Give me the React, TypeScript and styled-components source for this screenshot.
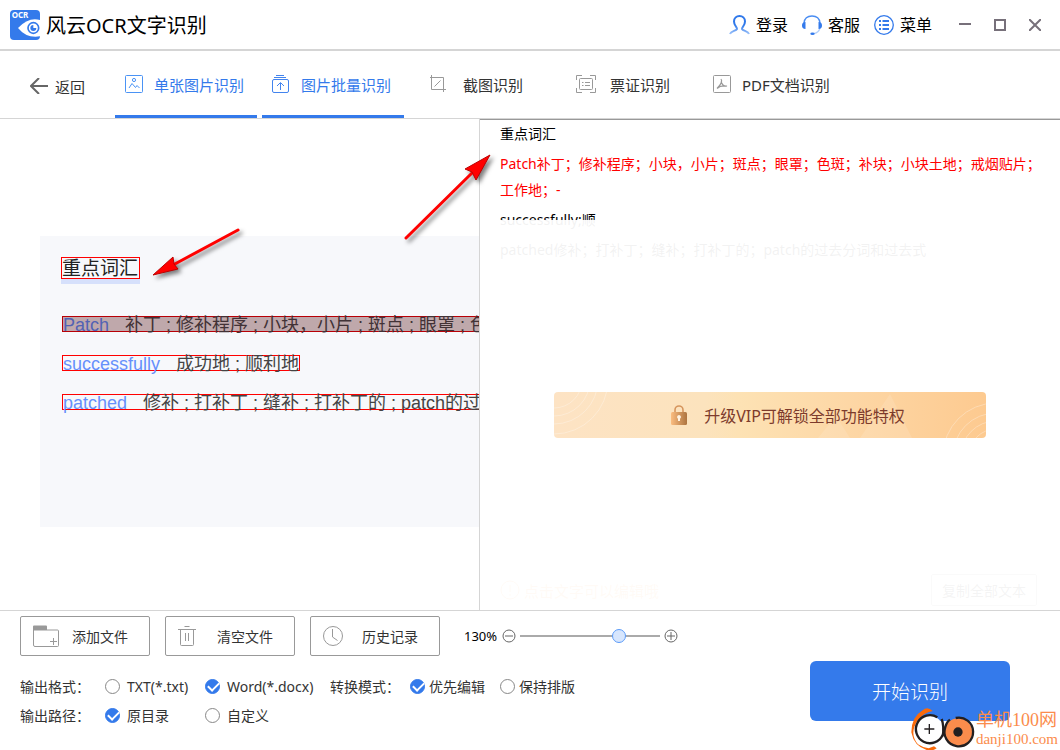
import React, { useState } from "react";
import styled, { createGlobalStyle, css } from "styled-components";

const BLUE = "#347aeb";
const INK = "#333";
const LINE = "#d5d5d5";
const GREY = "#999";

const GlobalStyle = createGlobalStyle`
  * { box-sizing: border-box; }
  body {
    margin: 0;
    background: #fff;
    color: ${INK};
    font-family: "Noto Sans", "Noto Sans CJK SC", sans-serif;
    font-size: 14px;
  }
  button, input { font: inherit; color: inherit; margin: 0; }
  button { background: none; border: 0; padding: 0; cursor: pointer; white-space: nowrap; }
  svg { display: block; flex: none; }
`;

const Page = styled.div`
  min-height: 100vh;
  display: flex;
  flex-direction: column;
`;

/* Title bar */
const TitleBar = styled.header`
  display: flex;
  align-items: center;
  height: 51px;
  padding: 0 8px 0 10px;
  border-bottom: 2px solid ${LINE};
`;
const AppTitle = styled.h1`
  flex: 1;
  margin: 0;
  padding: 2px 0 0 6px;
  font-size: 20px;
  font-weight: 400;
  line-height: 30px;
  color: #000;
  white-space: nowrap;
`;
const HeaderActions = styled.div`
  display: flex;
  gap: 14px;
  margin-right: 15px;
`;
const HeaderButton = styled.button`
  display: flex;
  align-items: center;
  gap: 6px;
  font-size: 16px;
  line-height: 24px;
  color: #000;
`;
const WindowButton = styled.button`
  width: 35px;
  height: 30px;
  display: flex;
  align-items: center;
  justify-content: center;
`;

/* Navigation */
const Nav = styled.nav`
  display: flex;
  height: 68px;
  padding-left: 30px;
  border-bottom: 1px solid ${LINE};
`;
const BackButton = styled.button`
  display: flex;
  align-items: center;
  gap: 7px;
  width: 85px;
  padding-top: 3px;
  font-size: 15px;
`;
const Tabs = styled.div`
  display: flex;
  gap: 5px;
`;
const Tab = styled.button<{ $active?: boolean; $short?: boolean }>`
  display: flex;
  align-items: center;
  gap: ${(p) => (p.$short ? 14 : 10)}px;
  width: 142px;
  padding-left: ${(p) => (p.$short ? 20 : 9)}px;
  padding-top: 2px;
  font-size: 15px;
  color: ${(p) => (p.$active ? BLUE : INK)};
  border-bottom: 3px solid ${(p) => (p.$active ? BLUE : "transparent")};
`;

/* Work area */
const Work = styled.main`
  flex: 1;
  display: grid;
  grid-template-columns: minmax(0, 24fr) minmax(0, 29fr);
`;
const PreviewPane = styled.section`
  position: relative;
  padding: 117px 0 0 40px;
  border-right: 1px solid ${LINE};
`;
const Scan = styled.div`
  min-height: 291px;
  padding: 21px 0 0 21px;
  overflow: hidden;
  background: #f7f8fb;
  display: flex;
  flex-direction: column;
  align-items: flex-start;
  font-family: "Liberation Sans", "Noto Sans CJK SC", sans-serif;
`;
const ScanTitle = styled.div`
  height: 27px;
  margin-bottom: 32px;
  border-bottom: 5px solid #d6e0fb;
`;
const ScanTitleBox = styled.div`
  width: 79px;
  height: 22px;
  border: 1px solid #f00;
  font-size: 19px;
  line-height: 22px;
  white-space: nowrap;
  color: #222;
`;
const ScanLine = styled.div<{ $selected?: boolean }>`
  height: 16px;
  margin: 0 0 23px 1px;
  border: 1px solid #f00;
  font-size: 18px;
  line-height: 16px;
  white-space: pre;
  color: #444;
  ${(p) =>
    p.$selected &&
    css`
      background: #bfa8ab;
      border-color: #b80006;
      color: #423236;
    `}
`;
const Word = styled.span<{ $selected?: boolean }>`
  margin-right: 16px;
  color: ${(p) => (p.$selected ? "#5262b4" : "#6690fb")};
`;
const Arrow = styled.svg`
  position: absolute;
  z-index: 2;
  overflow: visible;
  filter: drop-shadow(3px 3px 2px rgba(0, 0, 0, 0.5));
`;
const ScanArrow = styled(Arrow)`
  left: 145px;
  top: 103px;
`;
const ResultArrow = styled(Arrow)`
  right: -20px;
  top: 25px;
`;

const ResultPane = styled.section`
  position: relative;
  display: flex;
  flex-direction: column;
  padding: 1px 12px 4px 20px;
  border-top: 1px solid #999;
`;
const ResultText = styled.div`
  flex: 1;
  display: flex;
  flex-direction: column;
  gap: 4px;
  line-height: 26px;
  color: #000;
`;
const ResultLine = styled.p<{ $hot?: boolean }>`
  margin: 0;
  color: ${(p) => (p.$hot ? "#f00" : "inherit")};
`;
const ResultFoot = styled.div`
  display: flex;
  align-items: center;
  justify-content: space-between;
  padding-right: 11px;
`;
const Hint = styled.span`
  display: flex;
  align-items: center;
  gap: 4px;
  font-size: 15px;
  color: #f5a04a;
`;
const CopyButton = styled.button`
  width: 106px;
  height: 32px;
  border: 1px solid #999;
  border-radius: 2px;
`;
const Veil = styled.div`
  position: absolute;
  inset: 100px 0 0 0;
  display: flex;
  align-items: center;
  justify-content: center;
  background: rgba(255, 255, 255, 0.95);
`;
const VipButton = styled.button`
  position: relative;
  display: flex;
  align-items: center;
  justify-content: center;
  gap: 17px;
  width: 432px;
  height: 46px;
  padding-left: 36px;
  overflow: hidden;
  border-radius: 4px;
  font-size: 16px;
  color: #7d3b2c;
  background: linear-gradient(90deg, #fde3c4 0%, #fce3bd 35%, #fde2b4 43%, #fdd6a4 70%, #fdca90 100%);
`;
const VipPattern = styled.svg`
  position: absolute;
  inset: 0;
`;
const VipLabel = styled.span`
  position: relative;
`;

/* Footer */
const Footer = styled.footer`
  display: flex;
  justify-content: space-between;
  padding: 5px 50px 18px 20px;
  border-top: 1px solid ${LINE};
`;
const Controls = styled.div`
  display: flex;
  flex-direction: column;
`;
const Toolbar = styled.div`
  display: flex;
  align-items: center;
  gap: 15px;
  margin-bottom: 18px;
`;
const ToolButton = styled.button`
  display: flex;
  align-items: center;
  gap: 12px;
  width: 130px;
  height: 40px;
  padding-left: 11px;
  border: 1px solid ${GREY};
  border-radius: 2px;
`;
const Zoom = styled.div`
  display: flex;
  align-items: center;
  margin-left: 9px;
  gap: 4px;
`;
const ZoomValue = styled.output`
  width: 34px;
  font-size: 13px;
  color: #000;
  white-space: nowrap;
`;
const ZoomSlider = styled.input`
  appearance: none;
  width: 140px;
  height: 16px;
  background: linear-gradient(#aaa, #aaa) center / 100% 2px no-repeat;
  &::-webkit-slider-thumb {
    appearance: none;
    width: 14px;
    height: 14px;
    border: 1px solid #5b9bf8;
    border-radius: 50%;
    background: #d7e6fd;
  }
`;
const Row = styled.div`
  display: flex;
  align-items: center;
  height: 24px;
  margin-bottom: 5px;
`;
const RowLabel = styled.span<{ $width: number }>`
  width: ${(p) => p.$width}px;
  white-space: nowrap;
`;
const OptionLabel = styled.label<{ $width: number; $tight?: boolean }>`
  display: flex;
  align-items: center;
  gap: ${(p) => (p.$tight ? 4 : 7)}px;
  width: ${(p) => p.$width}px;
  white-space: nowrap;
`;
const Radio = styled.input`
  appearance: none;
  flex: none;
  position: relative;
  width: 15px;
  height: 15px;
  border: 1px solid #888;
  border-radius: 50%;
  background: #fff;
  &:checked {
    border-color: ${BLUE};
    background: ${BLUE};
  }
  &:checked::after {
    content: "";
    position: absolute;
    left: 2px;
    top: 2px;
    width: 9px;
    height: 5px;
    border: solid #fff;
    border-width: 0 0 2px 2px;
    transform: rotate(-45deg);
  }
`;
const StartButton = styled.button`
  width: 200px;
  height: 60px;
  margin-top: 45px;
  border-radius: 6px;
  background: ${BLUE};
  color: #fff;
  font-size: 19px;
  font-weight: 300;
`;
const Watermark = styled.div`
  position: absolute;
  right: 2px;
  bottom: 0;
  display: flex;
  align-items: flex-end;
  pointer-events: none;
`;
const WatermarkText = styled.div`
  padding-bottom: 2px;
  font-family: "Liberation Serif", "Noto Sans CJK SC", serif;
  font-size: 18px;
  line-height: 19px;
  color: #fb8c4c;
  white-space: nowrap;
`;
const WatermarkUrl = styled.div`
  font-size: 15px;
  line-height: 18px;
`;
const Frame = styled.div`
  position: relative;
`;

const Logo = () => (
  <svg width="30" height="30" viewBox="0 0 90 90">
    <rect width="90" height="90" rx="12" fill={BLUE} />
    <path d="M90 30Q56 20 24 54Q50 86 90 79z" fill="#fff" />
    <circle cx="70" cy="54" r="16" fill="#fff" stroke={BLUE} strokeWidth="5" />
    <path d="M70 45A9 9 0 1 0 79 54H70z" fill={BLUE} />
    <text x="5" y="24" fontFamily="Noto Sans, sans-serif" fontWeight="700" fontSize="24" fill="#fff">OCR</text>
  </svg>
);

const UserIcon = () => (
  <svg width="21" height="20" viewBox="0 0 21 20" fill="none" stroke="url(#userFade)" strokeWidth="2">
    <defs>
      <linearGradient id="userFade" x1="0" y1="0" x2="0" y2="1">
        <stop offset="0.5" stopColor="#2f78ea" />
        <stop offset="1" stopColor="#9cc2fa" />
      </linearGradient>
    </defs>
    <path d="M1 19c1-3 6-3 7-5 .5-1.600-3-3-3-7.500C5 3 7.500 1 10.500 1S16 3 16 6.500c0 4.500-3.500 5.900-3 7.500 1 2 6 2 7 5" />
  </svg>
);
const HeadsetIcon = () => (
  <svg width="20" height="20" viewBox="0 0 20 20" fill="none">
    <path d="M2 8C2.500 3 6 1 10 1s7.500 2 8 7" stroke="#4a8df2" strokeWidth="1.300" />
    <path d="M18 13c-1 3.500-3 5-6 5.600" stroke="#b4d0fa" strokeWidth="1.300" />
    <path d="M3.500 7C1 7 0 8.500 0 10.500S1 14 3.500 14zM16.500 7C19 7 20 8.500 20 10.500S19 14 16.500 14z" fill={BLUE} />
    <ellipse cx="10.500" cy="18.700" rx="2.200" ry="1.300" fill={BLUE} />
  </svg>
);
const MenuIcon = () => (
  <svg width="20" height="20" viewBox="0 0 20 20" fill="none" stroke={BLUE}>
    <circle cx="10" cy="10" r="9.300" strokeWidth="1.300" />
    <path d="M5 6h2M8.500 6H15M5 10h2M8.500 10H15M5 14h2M8.500 14H15" strokeWidth="1.800" />
  </svg>
);

const PictureIcon = () => (
  <svg width="20" height="20" viewBox="0 0 20 20" fill="none" stroke="#4a93f5">
    <rect x="1.500" y="1.500" width="17" height="17" rx="1" />
    <circle cx="10" cy="6" r="1.600" />
    <path d="M5 14l3-4.500 3.500 4 1.500-2 2.500 2.500" />
  </svg>
);
const BatchIcon = () => (
  <svg width="20" height="20" viewBox="0 0 20 20" fill="none" stroke="#4384ee">
    <path d="M5 1.500h8M3 3.500h12" />
    <rect x="1.500" y="5.500" width="16" height="13" rx="1.500" />
    <path d="M9.500 16V9M6 12l3.500-3.500L13 12" />
  </svg>
);
const CropIcon = () => (
  <svg width="20" height="20" viewBox="0 0 20 20" fill="none" stroke={GREY}>
    <path d="M2.500 1v14.500H17M1 3.500h13.500V18M5.500 12.500l6-6" />
  </svg>
);
const TicketIcon = () => (
  <svg width="20" height="20" viewBox="0 0 20 20" fill="none" stroke={GREY}>
    <path d="M.5 6V1.500H6M14 1.500h5.500V6M19.500 14v4.500H14M6 18.500H.5V14" />
    <rect x="3.500" y="4.500" width="13" height="11" rx="1" />
    <path d="M6 8.500h1.500M9 8.500h5M6 11.500h1.500M9 11.500h5" />
  </svg>
);
const PdfIcon = () => (
  <svg width="20" height="20" viewBox="0 0 20 20" fill="none" stroke={GREY}>
    <rect x="1.500" y="1.500" width="17" height="17" rx="1" />
    <path d="M9 5c1.500 2 .5 5-4 9.500 2.500-2.500 6-3 10-2.500-3 .5-5-1.500-6-4.500" strokeWidth="1.200" />
  </svg>
);

const FolderIcon = () => (
  <svg width="28" height="24" viewBox="0 0 28 24" fill="none" stroke={GREY}>
    <path d="M1 2.500a1 1 0 0 1 1-1h12a1 1 0 0 1 1 1V6H1z" fill={GREY} stroke="none" />
    <path d="M1.500 6V21a1.500 1.500 0 0 0 1.500 1.500H25.500a1 1 0 0 0 1-1V7a1 1 0 0 0-1-1zM21.500 14v7M18 17.500h7" />
  </svg>
);
const TrashIcon = () => (
  <svg width="28" height="24" viewBox="0 0 28 24" fill="none" stroke={GREY}>
    <path d="M7.500 2.500h5M1 5.500h18M3.500 5.500v15a1 1 0 0 0 1 1h11a1 1 0 0 0 1-1v-15M8.500 9v8M11.500 9v8" />
  </svg>
);
const ClockIcon = () => (
  <svg width="28" height="24" viewBox="0 0 28 24" fill="none" stroke={GREY}>
    <circle cx="11" cy="12" r="9.500" />
    <path d="M10.500 5v8l5 3.500" />
  </svg>
);
const RoundSign = ({ plus }: { plus?: boolean }) => (
  <svg width="14" height="14" viewBox="0 0 14 14" fill="none" stroke="#666">
    <circle cx="7" cy="7" r="6" />
    <path d={plus ? "M3 7h8M7 3v8" : "M3 7h8"} />
  </svg>
);

const LockIcon = () => (
  <svg width="16" height="20" viewBox="0 0 16 20">
    <defs>
      <linearGradient id="lockFill">
        <stop offset="0" stopColor="#fbbd80" />
        <stop offset="1" stopColor="#ad7440" />
      </linearGradient>
    </defs>
    <path d="M4 8V5a4 4 0 0 1 8 0v3" fill="none" stroke="#d6955d" strokeWidth="1.600" />
    <rect y="7" width="16" height="13" rx="1.500" fill="url(#lockFill)" />
    <path d="M8 10a2 2 0 0 1 1 3.700V16H7v-2.300A2 2 0 0 1 8 10z" fill="#fff3e2" />
  </svg>
);

const WatermarkLogo = () => (
  <svg width="66" height="43" viewBox="360 170 198 129" fill="none">
    <path d="M384 208Q356 250 384 282Q398 292 416 294L432 288L440 294Q428 303 410 299Q372 288 364 246Q364 200 398 180Q412 166 428 182Q404 186 384 208Z" fill="#fb6a0a" />
    <circle cx="418" cy="238" r="42" fill="#fff" />
    <path d="M442 201A42 42 0 1 0 458 254M455 206Q463 228 458 258" stroke="#231f20" strokeWidth="7" />
    <circle cx="505" cy="246" r="42" fill="#fb8c4c" />
    <path d="M497 203A43 43 0 1 1 466 230Q470 214 480 208" stroke="#231f20" strokeWidth="7" />
    <circle cx="504" cy="245" r="14" fill="#231f20" />
    <path d="M418 221v30M403 236h30" stroke="#231f20" strokeWidth="4" />
  </svg>
);

const tabs = [
  { label: "单张图片识别", Icon: PictureIcon, active: true },
  { label: "图片批量识别", Icon: BatchIcon, active: true },
  { label: "截图识别", Icon: CropIcon, short: true },
  { label: "票证识别", Icon: TicketIcon, short: true },
  { label: "PDF文档识别", Icon: PdfIcon },
];

type OptionProps = {
  name: string;
  label: string;
  width: number;
  tight?: boolean;
  value: string;
  onPick: (v: string) => void;
};
const Option = ({ name, label, width, tight, value, onPick }: OptionProps) => (
  <OptionLabel $width={width} $tight={tight}>
    <Radio type="radio" name={name} checked={value === label} onChange={() => onPick(label)} />
    {label}
  </OptionLabel>
);

export default function App() {
  const [zoom, setZoom] = useState(130);
  const [format, setFormat] = useState("Word(*.docx)");
  const [mode, setMode] = useState("优先编辑");
  const [path, setPath] = useState("原目录");

  return (
    <Frame>
      <GlobalStyle />
      <Page>
        <TitleBar>
          <Logo />
          <AppTitle>风云OCR文字识别</AppTitle>
          <HeaderActions>
            <HeaderButton><UserIcon />登录</HeaderButton>
            <HeaderButton><HeadsetIcon />客服</HeaderButton>
            <HeaderButton><MenuIcon />菜单</HeaderButton>
          </HeaderActions>
          <WindowButton aria-label="最小化">
            <svg width="12" height="12" stroke="#77707a" strokeWidth="2"><path d="M0 5h12" /></svg>
          </WindowButton>
          <WindowButton aria-label="最大化">
            <svg width="12" height="12" fill="none" stroke="#77707a" strokeWidth="2"><path d="M1 1h10v10H1z" /></svg>
          </WindowButton>
          <WindowButton aria-label="关闭">
            <svg width="12" height="12" stroke="#77707a" strokeWidth="2"><path d="M0 0l12 12M12 0L0 12" /></svg>
          </WindowButton>
        </TitleBar>

        <Nav>
          <BackButton>
            <svg width="18" height="16" fill="none" stroke="#666" strokeWidth="2"><path d="M18 8H1M9 0L1 8l8 8" /></svg>
            返回
          </BackButton>
          <Tabs>
            {tabs.map(({ label, Icon, active, short }) => (
              <Tab key={label} $active={active} $short={short}>
                <Icon />
                {label}
              </Tab>
            ))}
          </Tabs>
        </Nav>

        <Work>
          <PreviewPane>
            <Scan>
              <ScanTitle><ScanTitleBox>重点词汇</ScanTitleBox></ScanTitle>
              <ScanLine $selected><Word $selected>Patch</Word>补丁 ; 修补程序 ; 小块，小片 ; 斑点 ; 眼罩 ; 色斑</ScanLine>
              <ScanLine><Word>successfully</Word>成功地 ; 顺利地</ScanLine>
              <ScanLine><Word>patched</Word>修补 ; 打补丁 ; 缝补 ; 打补丁的 ; patch的过去分词</ScanLine>
            </Scan>
            <ScanArrow width="100" height="60">
              <path d="M93 8L28 43" stroke="#f00" strokeWidth="3" strokeLinecap="round" />
              <path d="M8 53L28 35L29 42L33 47Z" fill="#f00" stroke="#b00" />
            </ScanArrow>
            <ResultArrow width="100" height="100">
              <path d="M7 94L74 28" stroke="#f00" strokeWidth="3" strokeLinecap="round" />
              <path d="M91 11L66 25L73 28L77 36Z" fill="#f00" stroke="#b00" />
            </ResultArrow>
          </PreviewPane>

          <ResultPane>
            <ResultText>
              <ResultLine>重点词汇</ResultLine>
              <ResultLine $hot>Patch补丁；修补程序；小块，小片；斑点；眼罩；色斑；补块；小块土地；戒烟贴片；工作地；-</ResultLine>
              <ResultLine>successfully;顺</ResultLine>
              <ResultLine>patched修补；打补丁；缝补；打补丁的；patch的过去分词和过去式</ResultLine>
            </ResultText>
            <ResultFoot>
              <Hint>
                <svg width="20" height="20" fill="none" stroke="#f5a04a"><circle cx="10" cy="10" r="9" /><path d="M10 5v7M10 14v2" /></svg>
                点击文字可以编辑哦
              </Hint>
              <CopyButton>复制全部文本</CopyButton>
            </ResultFoot>
            <Veil>
              <VipButton>
                <VipPattern width="432" height="46" fill="none" stroke="#fff" strokeOpacity="0.3">
                  <circle cx="0" cy="-12" r="28" /><circle cx="0" cy="-12" r="36" /><circle cx="0" cy="-12" r="44" /><circle cx="0" cy="-12" r="54" />
                  <circle cx="442" cy="64" r="53" /><circle cx="442" cy="64" r="43" /><circle cx="442" cy="64" r="35" /><circle cx="442" cy="64" r="27" />
                  <path d="M306 46L336 2L358 46zM264 46L282 24L296 46z" fill="#fff" fillOpacity="0.12" stroke="none" />
                </VipPattern>
                <LockIcon />
                <VipLabel>升级VIP可解锁全部功能特权</VipLabel>
              </VipButton>
            </Veil>
          </ResultPane>
        </Work>

        <Footer>
          <Controls>
            <Toolbar>
              <ToolButton><FolderIcon />添加文件</ToolButton>
              <ToolButton><TrashIcon />清空文件</ToolButton>
              <ToolButton><ClockIcon />历史记录</ToolButton>
              <Zoom>
                <ZoomValue>{zoom}%</ZoomValue>
                <button aria-label="缩小" onClick={() => setZoom(Math.max(50, zoom - 10))}><RoundSign /></button>
                <ZoomSlider type="range" aria-label="缩放" min={50} max={160} value={zoom} onChange={(e) => setZoom(Number(e.target.value))} />
                <button aria-label="放大" onClick={() => setZoom(Math.min(160, zoom + 10))}><RoundSign plus /></button>
              </Zoom>
            </Toolbar>
            <Row>
              <RowLabel $width={85}>输出格式：</RowLabel>
              <Option name="format" label="TXT(*.txt)" width={100} value={format} onPick={setFormat} />
              <Option name="format" label="Word(*.docx)" width={125} value={format} onPick={setFormat} />
              <RowLabel $width={80}>转换模式：</RowLabel>
              <Option name="mode" label="优先编辑" width={90} tight value={mode} onPick={setMode} />
              <Option name="mode" label="保持排版" width={90} tight value={mode} onPick={setMode} />
            </Row>
            <Row>
              <RowLabel $width={85}>输出路径：</RowLabel>
              <Option name="path" label="原目录" width={100} value={path} onPick={setPath} />
              <Option name="path" label="自定义" width={125} value={path} onPick={setPath} />
            </Row>
          </Controls>
          <StartButton>开始识别</StartButton>
        </Footer>
      </Page>
      <Watermark>
        <WatermarkLogo />
        <WatermarkText>
          单机100网
          <WatermarkUrl>danji100.com</WatermarkUrl>
        </WatermarkText>
      </Watermark>
    </Frame>
  );
}
